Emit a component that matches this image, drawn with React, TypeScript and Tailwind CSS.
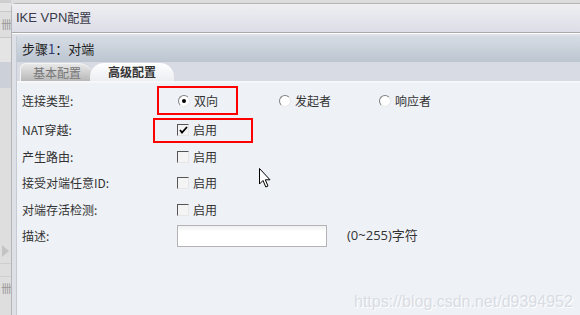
import React from "react";

const cjk = { fontFamily: '"Noto Sans CJK SC", "Liberation Sans", sans-serif' };

function Radio({ checked }: { checked?: boolean }) {
  return (
    <span className="relative inline-flex w-[12px] h-[12px] rounded-full border border-t-[#808080] border-l-[#808080] border-r-[#e8e8e8] border-b-[#e8e8e8] bg-white items-center justify-center">
      {checked && <span className="w-[4px] h-[4px] rounded-full bg-black" />}
    </span>
  );
}

function Check({ checked }: { checked?: boolean }) {
  return (
    <span className="relative inline-flex w-[12px] h-[12px] border border-t-[#555] border-l-[#555] border-r-[#e6e6e6] border-b-[#e6e6e6] bg-[#f4f4f4] items-center justify-center">
      {checked && (
        <svg width="9" height="8" viewBox="0 0 9 8">
          <path d="M1 4 L3 6.5 L8 1" stroke="#000" strokeWidth="1.8" fill="none" />
        </svg>
      )}
    </span>
  );
}

function Row({ label, mt, children }: { label: string; mt: string; children: React.ReactNode }) {
  return (
    <div className={`flex items-center h-[26px] ${mt}`}>
      <div className="w-[160px] pl-[5px] text-[12px] text-[#333]">{label}</div>
      <div className="flex items-center">{children}</div>
    </div>
  );
}

export default function App() {
  return (
    <div className="relative w-[580px] h-[315px] overflow-hidden flex bg-[#dcdcdc]" style={cjk}>
      {/* left strip */}
      <div className="w-[11px] flex flex-col bg-[#dedede] text-[#999] text-[11px] leading-none">
        <div className="h-[3px] bg-[#cfcfcf]" />
        <div className="h-[9px] bg-[#e4e4e4] border-b border-[#c8c8c8]" />
        <div className="h-[26px] flex items-center pl-[1px] border-b border-[#c8c8c8]">卌</div>
        <div className="h-[24px] bg-[#e4e4e4]" />
        <div className="h-[26px] bg-[#ccd0d8]" />
        <div className="h-[150px]" />
        <div className="h-[26px] flex items-center pl-[2px] border-b border-[#cfcfcf]">
          <span className="w-0 h-0 border-y-[6px] border-y-transparent border-l-[7px] border-l-[#c4c4c4]" />
        </div>
        <div className="h-[13px] border-b border-[#cfcfcf]" />
        <div className="h-[22px] flex items-center pl-[1px]">卌</div>
        <div className="flex-1" />
      </div>

      {/* dialog */}
      <div className="flex-1 flex flex-col mt-[3px] rounded-tl-[5px] border-l border-t border-[#b6b6b8] bg-[#dde0e7]">
        <div className="h-[29px] flex items-center pl-[4px] bg-gradient-to-b from-[#efeff1] to-[#dcdde7] text-[13px] text-[#3a3a4a] border-b border-[#a9a9ab]">
          <span style={{ fontFamily: '"Liberation Sans", "Noto Sans CJK SC", sans-serif' }}>IKE VPN</span>
          <span className="text-[12px]">配置</span>
        </div>
        <div className="h-[1px] bg-white" />
        <div className="flex-1 flex pt-[2px]">
          <div className="w-[4px]" />
          <div className="flex-1 flex flex-col border-l border-[#c6cad2]">
            <div className="h-[26px] flex items-center pl-[5px] bg-gradient-to-b from-[#d6dce4] to-[#bcc6d1] text-[13px] text-[#222]">
              步骤<span className="text-[#2a3a70]">1</span>：对端
            </div>
            <div className="h-[19px] bg-[#d8dbe3] flex items-end pl-[3px]">
              <div className="h-[18px] w-[74px] rounded-tl-[6px] rounded-tr-[16px] bg-gradient-to-b from-[#e8e8e8] to-[#b8b8b8] border-t border-l border-[#f4f4f4] flex items-center pl-[12px] text-[12px] text-[#777]">
                基本配置
              </div>
              <div className="h-[18px] w-[84px] -ml-[4px] rounded-tl-[14px] rounded-tr-[14px] bg-gradient-to-b from-[#ffffff] to-[#eceef2] flex items-center pl-[18px] text-[12px] text-[#333] font-bold">
                高级配置
              </div>
            </div>
            <div className="h-[2px] bg-[#f6f7f9]" />
            <div className="flex-1 bg-[#eef1f6] flex flex-col">
              <Row label="连接类型:" mt="mt-[5px]">
                <div className="flex items-center w-[100px] pl-[1px] gap-[4px] text-[12px] text-[#333]"><Radio checked />双向</div>
                <div className="flex items-center w-[100px] pl-[2px] gap-[4px] text-[12px] text-[#333]"><Radio />发起者</div>
                <div className="flex items-center w-[100px] pl-[2px] gap-[4px] text-[12px] text-[#333]"><Radio />响应者</div>
              </Row>
              <Row label="NAT穿越:" mt="mt-[3px]">
                <div className="flex items-center gap-[4px] text-[12px] text-[#333]"><Check checked />启用</div>
              </Row>
              <Row label="产生路由:" mt="mt-[1px]">
                <div className="flex items-center gap-[4px] text-[12px] text-[#333]"><Check />启用</div>
              </Row>
              <Row label="接受对端任意ID:" mt="mt-0">
                <div className="flex items-center gap-[4px] text-[12px] text-[#333]"><Check />启用</div>
              </Row>
              <Row label="对端存活检测:" mt="mt-[1px]">
                <div className="flex items-center gap-[4px] text-[12px] text-[#333]"><Check />启用</div>
              </Row>
              <Row label="描述:" mt="mt-0">
                <div className="w-[150px] h-[22px] border border-[#b4b4b4] bg-gradient-to-b from-[#f0f0f0] to-[#ffffff] to-[30%]" />
                <div className="ml-[20px] text-[13px] text-[#333]" style={{ fontFamily: '"Open Sans", "Noto Sans CJK SC", sans-serif' }}>
                  (0~255)字符
                </div>
              </Row>
            </div>
          </div>
        </div>
      </div>

      {/* red annotation boxes */}
      <div className="absolute left-[157px] top-[86px] w-[81px] h-[29px] border-2 border-[#ff0000]" />
      <div className="absolute left-[153px] top-[118px] w-[100px] h-[25px] border-2 border-[#ff0000]" />

      {/* mouse cursor */}
      <svg className="absolute left-[259px] top-[168px]" width="14" height="22" viewBox="0 0 14 22">
        <path d="M0.5 0.5 L0.5 16 L4 12.5 L6.8 19 L9 18 L6.3 11.8 L11 11.8 Z" fill="#fff" stroke="#000" strokeWidth="1" />
      </svg>

      {/* watermark */}
      <div
        className="absolute left-[354px] top-[290px] text-[16px] text-[#d9dce3]"
        style={{ fontFamily: '"Liberation Sans", sans-serif', textShadow: "1px 1px 0 #ffffff" }}
      >
        https://blog.csdn.net/d9394952
      </div>
    </div>
  );
}
